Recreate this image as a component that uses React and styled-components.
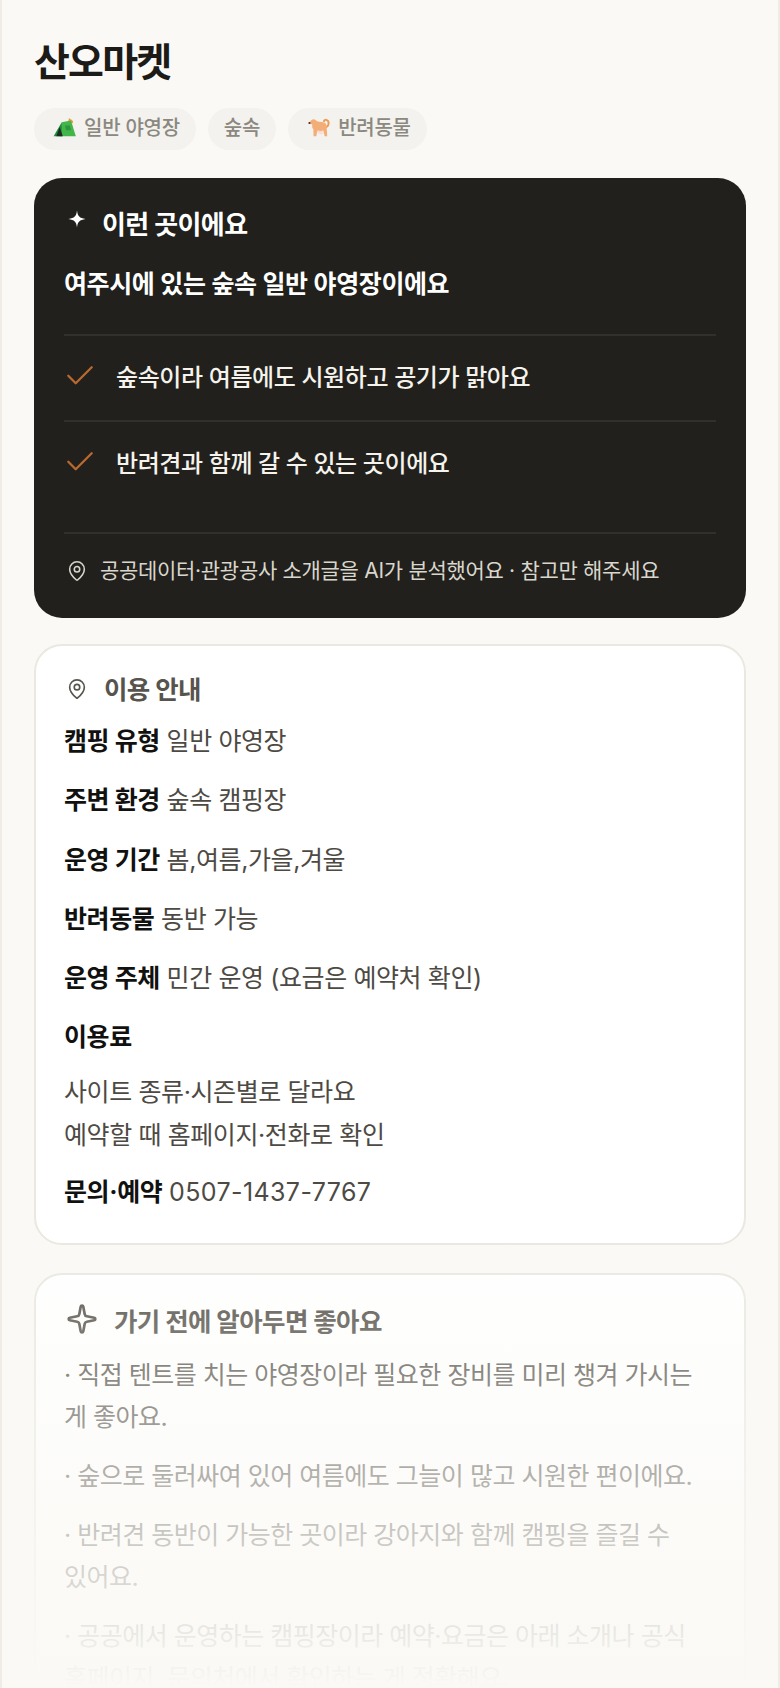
import React from "react";
import styled, { createGlobalStyle } from "styled-components";
import { MapPin, Sparkle } from "lucide-react";

const GlobalStyle = createGlobalStyle`
  html, body {
    margin: 0;
    padding: 0;
    background: #faf9f5;
  }
  * {
    box-sizing: border-box;
  }
`;

const Page = styled.div`
  position: relative;
  height: 1688px;
  overflow: hidden;
  padding: 37px 32px 0;
  background: #faf9f5;
  font-family: Inter, "Noto Sans CJK KR", sans-serif;
  color: #1c1b18;
  border-left: 2px solid #eeece5;
  border-right: 2px solid #eeece5;
`;

const Title = styled.h1`
  margin: 0;
  font-size: 39px;
  line-height: 50px;
  font-weight: 700;
  letter-spacing: -1.8px;
  color: #1c1b18;
`;

const ChipRow = styled.div`
  display: flex;
  gap: 12px;
  margin-top: 21px;
`;

const Chip = styled.span`
  display: inline-flex;
  align-items: center;
  gap: 6px;
  height: 42px;
  padding: 0 16px 5px ${(p) => (p.$icon ? 18 : 16)}px;
  border-radius: 21px;
  background: #f3f2ee;
  color: #8b8880;
  font-size: 20px;
  font-weight: 500;
  letter-spacing: -0.25px;
`;

const DarkCard = styled.section`
  margin-top: 28px;
  padding: 24px 30px 0;
  height: 440px;
  border-radius: 28px;
  background: #21201c;
  color: #ffffff;
`;

const CardHead = styled.div`
  display: flex;
  align-items: center;
  gap: ${(p) => p.$gap}px;
  height: 40px;
  padding-left: ${(p) => p.$inset || 2}px;
  font-size: ${(p) => p.$size || 25.5}px;
  font-weight: 700;
  letter-spacing: -0.6px;
  color: ${(p) => p.$color || "#ffffff"};
`;

const Summary = styled.p`
  margin: 24px 0 32px;
  font-size: 25px;
  line-height: 36px;
  font-weight: 600;
  letter-spacing: -0.4px;
`;

const Point = styled.div`
  display: flex;
  align-items: center;
  gap: 22px;
  height: 86px;
  padding: 0 0 6px 2px;
  border-top: 2px solid #31302b;
  font-size: 24px;
  font-weight: 500;
  letter-spacing: -0.4px;
  color: #f5f3ec;
`;

const Spacer = styled.div`
  height: 26px;
`;

const SourceNote = styled.div`
  display: flex;
  align-items: center;
  gap: 12px;
  height: 72px;
  padding-left: 2px;
  border-top: 2px solid #31302b;
  font-size: 21px;
  letter-spacing: -0.3px;
  color: #d9d6cc;
`;

const Card = styled.section`
  margin-top: ${(p) => p.$top}px;
  padding: ${(p) => p.$pad}px 28px 0;
  height: ${(p) => p.$height}px;
  border: 2px solid #eae8e1;
  border-radius: 28px;
  background: #ffffff;
`;

const InfoList = styled.div`
  margin-top: 13px;
`;

const InfoRow = styled.p`
  margin: 0;
  height: ${(p) => p.$height || 59.25}px;
  font-size: 25px;
  line-height: 42px;
  letter-spacing: -0.4px;
  color: #4d4a44;
`;

const Label = styled.b`
  font-weight: 700;
  color: #111110;
`;

const Phone = styled.span`
  letter-spacing: 0.4px;
`;

const TipList = styled.div`
  margin-top: 15px;
`;

const Tip = styled.p`
  margin: 0 0 17px;
  font-size: 25px;
  line-height: 42px;
  letter-spacing: -0.5px;
  word-break: keep-all;
  color: #57544d;
`;

const Fade = styled.div`
  position: absolute;
  left: 0;
  right: 0;
  bottom: 0;
  height: 450px;
  background: linear-gradient(
    to bottom,
    rgba(250, 249, 245, 0),
    rgba(250, 249, 245, 0.7) 66%,
    rgba(250, 249, 245, 0.9) 88%,
    rgba(250, 249, 245, 1)
  );
  pointer-events: none;
`;

const StarMark = styled.svg`
  margin-top: -7px;
`;

const Pin = styled(MapPin)`
  margin-top: 3px;
`;

const TentEmoji = () => (
  <svg width="26" height="26" viewBox="0 0 24 24">
    <path d="M14.500 7.500c.8-1 1-2.600 1.200-4 .6 1.400 3.600 1.800 3.800 3.800 0 .6-.2 1-.5 1.300z" fill="#f59a3c" />
    <path d="M9 7.500 17.500 6 22 20.500H7z" fill="#43b649" />
    <path d="M9 7.500 1.500 20.500H9z" fill="#1f8a3a" />
    <path d="M7 12 4 20.500h6z" fill="#1d2b20" />
    <path d="M12 10.500h4.500l1 4.500H13z" fill="#2f9440" />
  </svg>
);

const DogEmoji = () => (
  <svg width="26" height="26" viewBox="0 0 24 24">
    <path d="M19 12c2.600-1.500 2.600-6-.4-6.600-1.200-.2-2 .6-2 1.400" fill="none" stroke="#ee9a55" strokeWidth="1.800" strokeLinecap="round" />
    <path d="M2.500 8.500 5 5.500c1.200-1 3-1 3.800 0 1.200 1.500 3 1.800 5.200 1.800 2.400 0 4.600.8 5 3.700l.6 9.500h-2.400l-1.200-5c-1.800 1.200-4 1.200-5.600.4l-.9 4.600H7l-.2-6.500c-1.200-1-1.300-3-1-4.300z" fill="#f3ae78" />
    <path d="M10.500 14.500c1.600 1.500 3.500 1.500 5.500.5l-.3 3-1.700 1-2.500-1z" fill="#fadbd8" />
    <circle cx="3.200" cy="8.300" r="1" fill="#4a2d1c" />
  </svg>
);

const CheckMark = () => (
  <svg width="28" height="20" viewBox="0 0 28 20" fill="none" stroke="#b9692f" strokeWidth="2.300" strokeLinecap="round" strokeLinejoin="round">
    <path d="M2.300 10.700 9.700 18.300 25.700 2.300" />
  </svg>
);

const info = [
  ["캠핑 유형", "일반 야영장"],
  ["주변 환경", "숲속 캠핑장"],
  ["운영 기간", "봄,여름,가을,겨울"],
  ["반려동물", "동반 가능"],
  ["운영 주체", "민간 운영 (요금은 예약처 확인)"],
];

const tips = [
  "· 직접 텐트를 치는 야영장이라 필요한 장비를 미리 챙겨 가시는 게 좋아요.",
  "· 숲으로 둘러싸여 있어 여름에도 그늘이 많고 시원한 편이에요.",
  "· 반려견 동반이 가능한 곳이라 강아지와 함께 캠핑을 즐길 수 있어요.",
  "· 공공에서 운영하는 캠핑장이라 예약·요금은 아래 소개나 공식 홈페이지, 문의처에서 확인하는 게 정확해요.",
];

export default function App() {
  return (
    <Page>
      <GlobalStyle />
      <Title>산오마켓</Title>
      <ChipRow>
        <Chip $icon>
          <TentEmoji />
          일반 야영장
        </Chip>
        <Chip>숲속</Chip>
        <Chip $icon>
          <DogEmoji />
          반려동물
        </Chip>
      </ChipRow>

      <DarkCard>
        <CardHead $gap={16} $inset={4} $size={26}>
          <StarMark width="18" height="18" viewBox="0 0 18 18" fill="#ffffff">
            <path d="M9 .5C9.700 6.300 11.500 8 17.500 9 11.500 10 9.700 11.700 9 17.500 8.300 11.700 6.500 10 .5 9 6.500 8 8.300 6.300 9 .5z" />
          </StarMark>
          이런 곳이에요
        </CardHead>
        <Summary>여주시에 있는 숲속 일반 야영장이에요</Summary>
        <Point>
          <CheckMark />
          숲속이라 여름에도 시원하고 공기가 맑아요
        </Point>
        <Point>
          <CheckMark />
          반려견과 함께 갈 수 있는 곳이에요
        </Point>
        <Spacer />
        <SourceNote>
          <Pin size={22} strokeWidth={1.7} color="#d9d6cc" />
          공공데이터·관광공사 소개글을 AI가 분석했어요 · 참고만 해주세요
        </SourceNote>
      </DarkCard>

      <Card $top={26} $pad={21} $height={601}>
        <CardHead $gap={16} $color="#57544d">
          <Pin size={22} strokeWidth={1.8} color="#57544d" />
          이용 안내
        </CardHead>
        <InfoList>
          {info.map(([label, value]) => (
            <InfoRow key={label}>
              <Label>{label}</Label> {value}
            </InfoRow>
          ))}
          <InfoRow $height={55}>
            <Label>이용료</Label>
          </InfoRow>
          <InfoRow $height={43}>사이트 종류·시즌별로 달라요</InfoRow>
          <InfoRow $height={57}>예약할 때 홈페이지·전화로 확인</InfoRow>
          <InfoRow>
            <Label>문의·예약</Label> <Phone>0507-1437-7767</Phone>
          </InfoRow>
        </InfoList>
      </Card>

      <Card $top={28} $pad={24} $height={500}>
        <CardHead $gap={16} $color="#57544d">
          <Sparkle size={32} strokeWidth={2} color="#57544d" />
          가기 전에 알아두면 좋아요
        </CardHead>
        <TipList>
          {tips.map((t) => (
            <Tip key={t}>{t}</Tip>
          ))}
        </TipList>
      </Card>

      <Fade />
    </Page>
  );
}
